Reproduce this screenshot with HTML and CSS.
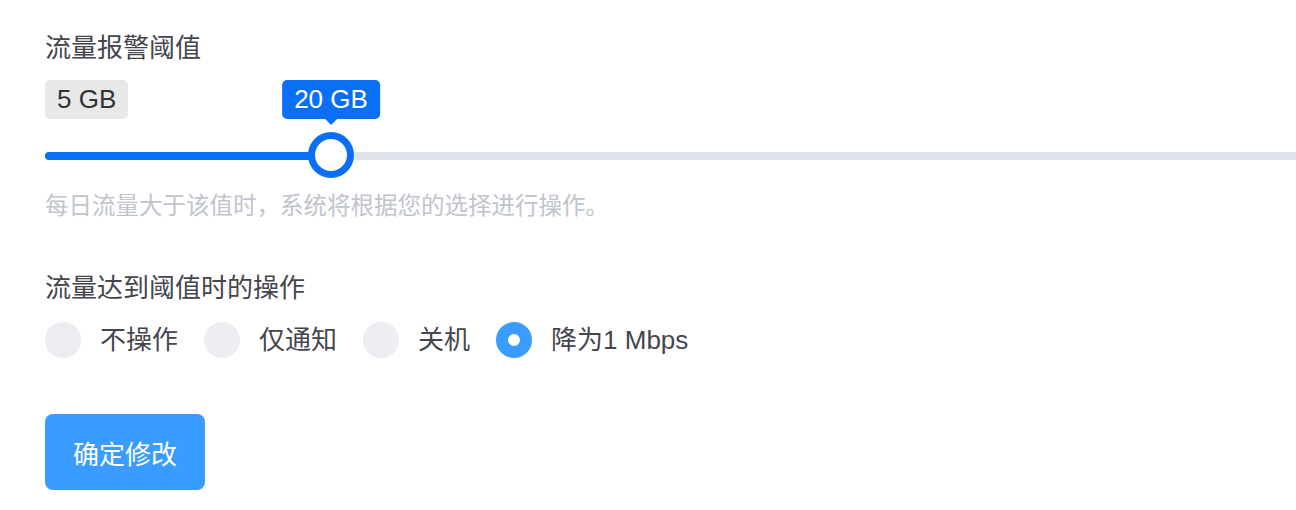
FILE: index.html
```html
<!DOCTYPE html>
<html lang="zh-CN">
<head>
    <meta charset="UTF-8">
    <meta name="viewport" content="width=device-width, initial-scale=1.0">
    <title>流量报警阈值</title>
    <link rel="stylesheet" href="styles.css">
</head>
<body>
    <div class="form">
        <div class="field">
            <div class="label">流量报警阈值</div>
            <div class="range-min">
                <span class="badge">5 GB</span>
            </div>
            <div class="slider">
                <div class="track">
                    <div class="fill" style="width: 286px"></div>
                </div>
                <div class="handle" style="left: 286px"></div>
                <div class="tip" style="left: 286px">20 GB</div>
            </div>
            <div class="hint">每日流量大于该值时，系统将根据您的选择进行操作。</div>
        </div>

        <div class="field second">
            <div class="label">流量达到阈值时的操作</div>
            <div class="radios">
                <label class="radio"><span class="dot"></span>不操作</label>
                <label class="radio"><span class="dot"></span>仅通知</label>
                <label class="radio"><span class="dot"></span>关机</label>
                <label class="radio checked"><span class="dot"></span>降为1 Mbps</label>
            </div>
        </div>

        <button class="submit">确定修改</button>
    </div>
</body>
</html>
```

FILE: styles.css
```css
body {
    margin: 0;
    padding: 0;
    background: #fff;
    font-family: "Liberation Sans", "Noto Sans CJK SC", sans-serif;
    color: #45454d;
    overflow: hidden;
}
.form {
    padding: 30px 0 0 45px;
}
.label {
    font-size: 26px;
    line-height: 36px;
}
.range-min {
    margin-top: 14px;
    height: 39px;
}
.badge {
    display: inline-block;
    height: 39px;
    line-height: 39px;
    padding: 0 12px;
    font-size: 26px;
    color: #333;
    background: #e8e8e8;
    border-radius: 5px;
}
.slider {
    position: relative;
    margin-top: 13px;
    height: 46px;
}
.track {
    position: relative;
    top: 20px;
    height: 8px;
    background: #dfe4ea;
    border-radius: 4px 0 0 4px;
}
.fill {
    height: 8px;
    background: #0a6ff5;
    border-radius: 4px 0 0 4px;
}
.handle {
    position: absolute;
    top: 0;
    width: 32px;
    height: 32px;
    margin-left: -23px;
    border: 7px solid #0a6ff5;
    border-radius: 50%;
    background: #fff;
}
.tip {
    position: absolute;
    bottom: calc(100% + 13px);
    transform: translateX(-50%);
    height: 39px;
    line-height: 39px;
    padding: 0 12px;
    font-size: 26px;
    color: #fff;
    background: #0a6ff5;
    border-radius: 5px;
    white-space: nowrap;
}
.tip::after {
    content: "";
    position: absolute;
    left: 50%;
    top: 100%;
    margin-left: -6px;
    border: 6px solid transparent;
    border-top-color: #0a6ff5;
}
.hint {
    margin-top: 12px;
    font-size: 23.5px;
    line-height: 32px;
    color: #c0c4cc;
}
.second {
    margin-top: 48px;
}
.radios {
    display: flex;
    margin-top: 16px;
}
.radio {
    display: flex;
    align-items: center;
    margin-right: 26px;
    font-size: 26px;
    line-height: 36px;
}
.dot {
    width: 36px;
    height: 36px;
    margin-right: 19px;
    border-radius: 50%;
    background: #ebedf2;
    box-sizing: border-box;
}
.radio.checked .dot {
    border: 12px solid #3a9cff;
    background-clip: padding-box;
    background-color: #fff;
}
.submit {
    display: block;
    margin-top: 56px;
    width: 160px;
    height: 76px;
    border: none;
    border-radius: 8px;
    background: #3a9cff;
    color: #fff;
    font-family: inherit;
    font-size: 26px;
    cursor: pointer;
}
```
